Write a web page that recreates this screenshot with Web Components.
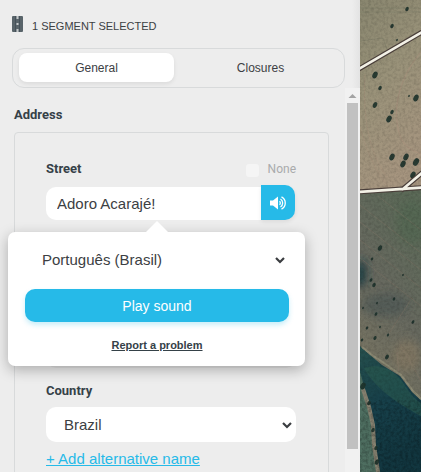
<!DOCTYPE html>
<html lang="en">
<head>
<meta charset="utf-8">
<meta name="viewport" content="width=device-width, initial-scale=1">
<title>Segment editor</title>
<style>
  html, body { height: 100%; }
  body {
    --accent: #26bae8;
    --ink: #3c4043;
    --heading: #354148;
    --line: #d8dadb;
    --heading-font: Roboto, sans-serif;
    margin: 0;
    overflow: hidden;
    background: #ededed;
    color: var(--ink);
    font: 15px/20px "Liberation Sans", Arial, sans-serif;
  }
</style>
</head>
<body>
<map-editor>
  <edit-panel slot="panel">
    <panel-title slot="title">1 SEGMENT SELECTED</panel-title>
    <tab-bar slot="tabs" tabs="General,Closures"></tab-bar>
    <field-group heading="Address">
      <street-field></street-field>
      <city-field></city-field>
      <select-field name="State" bare></select-field>
      <select-field name="Country" value="Brazil"></select-field>
      <alt-link slot="footer">+ Add alternative name</alt-link>
    </field-group>
  </edit-panel>
  <aerial-map slot="map"></aerial-map>
</map-editor>

<script>
// Small base: puts the static template of the class in an open shadow root
class BaseElement extends HTMLElement {
  constructor() {
    super();
    this.attachShadow({ mode: 'open' });
  }

  connectedCallback() {
    this.shadowRoot.innerHTML = `
      <style>
        *, *::before, *::after { box-sizing: border-box; }
        button, input, select { font: inherit; color: inherit; border: 0; margin: 0; }
      </style>
      ${this.template()}
    `;
  }
}

class MapEditor extends BaseElement {
  template() {
    return `
      <style>
        :host { display: flex; height: 100vh; }
        .panel { flex: 0 0 360px; min-width: 0; display: flex; }
        .map { flex: 1; min-width: 0; display: flex; }
      </style>
      <div class="panel"><slot name="panel"></slot></div>
      <div class="map"><slot name="map"></slot></div>
    `;
  }
}

class EditPanel extends BaseElement {
  template() {
    return `
      <style>
        :host {
          flex: 1;
          min-width: 0;
          display: flex;
          flex-direction: column;
          background: linear-gradient(to left, #e3e3e3, #ededed 8px);
        }
        header { padding: 15px 15px 0 12px; }
        .body { flex: 1; min-height: 0; display: flex; overflow: hidden; background: #ededed; }
        .content { flex: 1; min-width: 0; padding: 19px 16px 0 14px; }
      </style>
      <header>
        <slot name="title"></slot>
        <slot name="tabs"></slot>
      </header>
      <div class="body">
        <div class="content"><slot></slot></div>
        <scroll-track></scroll-track>
      </div>
    `;
  }
}

class PanelTitle extends BaseElement {
  template() {
    return `
      <style>
        :host { display: flex; align-items: center; gap: 9px; font-size: 11px; line-height: 18px; margin-bottom: 13px; }
        svg { width: 11px; height: 18px; }
        span { padding-top: 2px; }
      </style>
      <svg viewBox="0 0 11 18" aria-hidden="true">
        <rect width="11" height="16" rx="1" fill="#59646a"/>
        <path d="M3.500 0v16M7.500 0v16" stroke="#46525a" stroke-width="1"/>
        <path d="M5.500 0v3M5.500 7v2M5.500 13v3" stroke="#c5c9cb" stroke-width="2"/>
      </svg>
      <span><slot></slot></span>
    `;
  }
}

class TabBar extends BaseElement {
  template() {
    const tabs = this.getAttribute('tabs').split(',');
    return `
      <style>
        :host {
          display: grid;
          grid-template-columns: 1fr 1fr;
          gap: 9px;
          padding: 4px 6px 5px;
          border: 1px solid var(--line);
          border-radius: 12px;
          box-sizing: border-box;
          height: 40px;
        }
        button { background: none; border-radius: 8px; font-size: 12px; padding: 0; }
        button[aria-selected=true] { background: #fff; box-shadow: 0 2px 4px rgba(0, 0, 0, .08); }
      </style>
      ${tabs.map((tab, i) => `<button role="tab" aria-selected="${i === 0}">${tab}</button>`).join('')}
    `;
  }
}

class ScrollTrack extends BaseElement {
  template() {
    return `
      <style>
        :host { flex: 0 0 15px; display: flex; flex-direction: column; background: #f1f1f1; }
        svg { width: 15px; height: 15px; }
        .thumb { flex: 0 0 auto; height: 90%; margin: 0 2px; background: #c1c1c1; }
      </style>
      <svg viewBox="0 0 15 15" aria-hidden="true"><path d="M3.500 10l4-4 4 4z" fill="#a3a3a3"/></svg>
      <div class="thumb"></div>
    `;
  }
}

class FieldGroup extends BaseElement {
  template() {
    return `
      <style>
        :host { display: block; }
        h2 { margin: 0 0 9px; font: bold 13px/16px var(--heading-font); color: var(--heading); }
        .box {
          display: flex;
          flex-direction: column;
          gap: 15px;
          padding: 28px 32px 32px 31px;
          border: 1px solid var(--line);
          border-radius: 4px;
        }
        .footer { margin-top: -8px; }
      </style>
      <h2>${this.getAttribute('heading')}</h2>
      <div class="box">
        <slot></slot>
        <div class="footer"><slot name="footer"></slot></div>
      </div>
    `;
  }
}

// Shared look of the labelled controls
const fieldStyle = `
  :host { display: flex; flex-direction: column; gap: 8px; position: relative; }
  .label { display: block; height: 16px; font: bold 13px/16px var(--heading-font); color: var(--heading); }
  .control { width: 100%; height: 35px; border-radius: 10px; background: #fff; }
`;

const selectStyle = `
  .select { display: grid; align-items: center; }
  .select > * { grid-area: 1 / 1; }
  .select select { appearance: none; padding: 0; outline: 0; background: none; }
  .select svg { justify-self: end; width: 10px; height: 8px; pointer-events: none; }
`;

const chevron = `
  <svg viewBox="0 0 10 8" aria-hidden="true">
    <path d="M1 2l4 4 4-4" fill="none" stroke="#3a3d40" stroke-width="2.200"/>
  </svg>
`;

class StreetField extends BaseElement {
  template() {
    return `
      <style>
        ${fieldStyle}
        .head { display: flex; justify-content: space-between; align-items: center; height: 16px; }
        .none { display: flex; align-items: center; gap: 9px; font: 12px/16px var(--heading-font); color: #a9abac; }
        .none input { appearance: none; width: 13px; height: 13px; margin-top: 3px; border-radius: 3px; background: #f5f5f5; }
        .row { display: flex; align-items: flex-end; height: 35px; padding-right: 1px; }
        .row input { flex: 1; min-width: 0; height: 33px; padding: 0 11px; outline: 0; background: #fff; border-radius: 10px 0 0 10px; }
        button {
          display: grid;
          place-items: center;
          width: 34px;
          height: 35px;
          padding: 0;
          background: var(--accent);
          border-radius: 0 10px 10px 0;
          box-shadow: 0 2px 4px rgba(0, 0, 0, .08);
        }
        svg { width: 18px; height: 16px; }
        sound-popup { position: absolute; top: 71px; left: -38px; right: -9px; z-index: 1; }
      </style>
      <div class="head">
        <label class="label" for="street">Street</label>
        <label class="none"><input type="checkbox" disabled>None</label>
      </div>
      <div class="row">
        <input id="street" type="text" value="Adoro Acarajé!">
        <button aria-label="Listen">
          <svg viewBox="0 0 18 16" aria-hidden="true">
            <path d="M1 5.500h3l5-4v13l-5-4H1z" fill="#fff"/>
            <path d="M10.500 6.300a2.200 2.200 0 0 1 0 3.400M11.500 4a4.800 4.800 0 0 1 0 8M12.500 1.800a7 7 0 0 1 0 12.400" fill="none" stroke="#fff" stroke-width="1.300"/>
          </svg>
        </button>
      </div>
      <sound-popup></sound-popup>
    `;
  }
}

class SoundPopup extends BaseElement {
  template() {
    return `
      <style>
        ${selectStyle}
        :host {
          display: flex;
          flex-direction: column;
          padding: 13px 16px 11px 17px;
          border-radius: 7px;
          background: #fff;
          box-shadow: 0 4px 14px rgba(0, 0, 0, .28);
          box-sizing: border-box;
        }
        /* pointer towards the street name */
        :host::before {
          content: "";
          position: absolute;
          left: 50%;
          top: -11px;
          margin-left: -11px;
          border: 11px solid transparent;
          border-top: 0;
          border-bottom-color: #fff;
        }
        .select { height: 30px; padding: 0 4px 0 17px; margin-bottom: 14px; }
        .play {
          height: 33px;
          border-radius: 10px;
          background: var(--accent);
          color: #fff;
          font-size: 14px;
          box-shadow: 0 3px 5px rgba(38, 186, 232, .25);
        }
        a { align-self: center; margin-top: 14px; font-size: 11px; line-height: 19px; font-weight: bold; color: var(--heading); }
      </style>
      <div class="select">
        <select aria-label="Language"><option>Português (Brasil)</option></select>
        ${chevron}
      </div>
      <button class="play">Play sound</button>
      <a href="#">Report a problem</a>
    `;
  }
}

class CityField extends BaseElement {
  template() {
    return `
      <style>${fieldStyle}</style>
      <span class="label"></span>
      <input class="control" type="text" aria-label="City">
    `;
  }
}

class SelectField extends BaseElement {
  template() {
    const name = this.getAttribute('name');
    const value = this.getAttribute('value') || '';
    const bare = this.hasAttribute('bare');
    return `
      <style>
        ${fieldStyle}
        ${selectStyle}
        .select { padding: 0 4px 0 18px; }
        :host([bare]) .control { background: #e2e2e2; }
      </style>
      <label class="label" for="value">${bare ? '' : name}</label>
      <div class="control select">
        <select id="value" aria-label="${name}"><option>${value}</option></select>
        ${bare ? '' : chevron}
      </div>
    `;
  }
}

class AltLink extends BaseElement {
  template() {
    return `
      <style>
        :host { display: block; }
        a { color: var(--accent); }
      </style>
      <a href="#"><slot></slot></a>
    `;
  }
}

class AerialMap extends BaseElement {
  // Trees: x, y, radius
  trees = [
    [47, 9, 2], [32, 26, 2], [37, 40, 1], [15, 75, 3], [20, 88, 2], [15, 105, 2.5], [32, 112, 2],
    [29, 119, 3], [56, 98, 3], [49, 96, 1], [32, 157, 3], [46, 157, 3], [43, 164, 3], [56, 162, 3.4],
    [53, 175, 3], [20, 248, 2.4], [12, 259, 1.4], [11, 280, 1.6], [14, 285, 2], [17, 303, 1],
    [34, 299, 1.5], [43, 275, 1], [16, 314, 1.6], [3, 308, 1], [7, 328, 1.4], [20, 327, 1],
    [15, 338, 1.8], [28, 335, 1.3], [27, 357, 2.2], [53, 322, 1.6], [2, 340, 1.4],
    [3, 386, 3], [9, 403, 2], [13, 430, 2], [16, 448, 2], [17, 462, 2.4]
  ];

  template() {
    const trees = this.trees.map(([x, y, r]) =>
      `<ellipse cx="${x}" cy="${y}" rx="${r * 0.8}" ry="${r * 1.2}" transform="rotate(28 ${x} ${y})"/>`).join('');
    return `
      <style>
        :host { flex: 1; display: flex; min-width: 0; }
        svg { width: 100%; height: 100%; display: block; }
      </style>
      <svg viewBox="0 0 61 472" preserveAspectRatio="xMinYMin slice" role="img" aria-label="Aerial view">
        <defs>
          <linearGradient id="dry" x2=".3" y2="1">
            <stop offset="0" stop-color="#89866f"/>
            <stop offset=".45" stop-color="#999279"/>
            <stop offset="1" stop-color="#a6957f"/>
          </linearGradient>
          <linearGradient id="field" x1=".7" x2=".3" y2="1">
            <stop offset="0" stop-color="#5c6a58"/>
            <stop offset=".5" stop-color="#67695f"/>
            <stop offset="1" stop-color="#7a7663"/>
          </linearGradient>
          <linearGradient id="wood" x2=".3" y2="1">
            <stop offset="0" stop-color="#26504d"/>
            <stop offset=".5" stop-color="#17404a"/>
            <stop offset="1" stop-color="#12363f"/>
          </linearGradient>
          <filter id="grain" x="0" y="0" width="1" height="1">
            <feTurbulence type="fractalNoise" baseFrequency=".35" numOctaves="3" seed="4"/>
            <feColorMatrix values="0 0 0 0 0  0 0 0 0 0  0 0 0 0 0  1.6 0 0 0 -.6"/>
          </filter>
          <filter id="soft"><feGaussianBlur stdDeviation=".6"/></filter>
          <filter id="patch"><feGaussianBlur stdDeviation="5"/></filter>
        </defs>
        <rect width="61" height="195" fill="url(#dry)"/>
        <g fill="none" stroke="#a98f7c" stroke-width="1" opacity=".6">
          <path d="M61 52C44 72 34 98 37 122s12 27 24 32"/>
          <path d="M0 127c8 28 16 44 27 58M5 74c-2 40 2 76 22 103" opacity=".6"/>
          <path d="M0 41l23-3 5 14M0 8h61M0 12h61" stroke="#6f715f" opacity=".6"/>
        </g>
        <path d="M0 192l61-4v214L0 348z" fill="url(#field)"/>
        <g filter="url(#patch)">
          <ellipse cx="52" cy="223" rx="16" ry="22" fill="#50664f" opacity=".6"/>
          <ellipse cx="25" cy="305" rx="24" ry="12" fill="#4d5754" opacity=".7"/>
          <ellipse cx="1" cy="274" rx="5" ry="15" fill="#15383f"/>
          <ellipse cx="47" cy="356" rx="14" ry="16" fill="#827862" opacity=".8"/>
        </g>
        <g fill="none" stroke="#8a7768" stroke-width="1" opacity=".3">
          <path d="M0 205l61 48M0 222l61 48M0 240l61 48M0 258l61 48M18 196l43 34"/>
          <path d="M28 335l22-34M37 352l2 24M40 344l21 37"/>
        </g>
        <path d="M0 346l10 9 12 10 18 11 12 16 9 8v72H0z" fill="url(#wood)"/>
        <path d="M4 368c18-6 32 4 40 16s12 16 17 19v13c-21-11-46-27-57-48z" fill="#2b5a50" opacity=".6" filter="url(#soft)"/>
        <path d="M2 347l10 8 12 8 17 12 12 16 8 8" fill="none" stroke="#8c8a74" stroke-width="2"/>
        <path d="M0 372l4 14 5 22 5 27 5 37H0z" fill="#4e6e60"/>
        <path d="M3 389l6 18 4 18 1 20 4 27" fill="none" stroke="#858170" stroke-width="4"/>
        <g fill="#1e302c" opacity=".9" filter="url(#soft)">${trees}</g>
        <rect width="61" height="472" filter="url(#grain)" opacity=".16"/>
        <rect y="400" width="61" height="72" filter="url(#grain)" opacity=".2"/>
        <g fill="none" stroke-linecap="square">
          <path d="M-2 69.500L63 31.500M43 189L63 172" stroke="#4a3f3a" stroke-width="5"/>
          <path d="M-2 192L63 187.500" stroke="#4a3f3a" stroke-width="5"/>
          <path d="M-2 69.500L63 31.500M43 189L63 172M-2 192L63 187.500" stroke="#f3f1e6" stroke-width="2.600"/>
        </g>
      </svg>
    `;
  }
}

customElements.define('scroll-track', ScrollTrack);
customElements.define('sound-popup', SoundPopup);
customElements.define('map-editor', MapEditor);
customElements.define('edit-panel', EditPanel);
customElements.define('panel-title', PanelTitle);
customElements.define('tab-bar', TabBar);
customElements.define('field-group', FieldGroup);
customElements.define('street-field', StreetField);
customElements.define('city-field', CityField);
customElements.define('select-field', SelectField);
customElements.define('alt-link', AltLink);
customElements.define('aerial-map', AerialMap);
</script>
</body>
</html>
